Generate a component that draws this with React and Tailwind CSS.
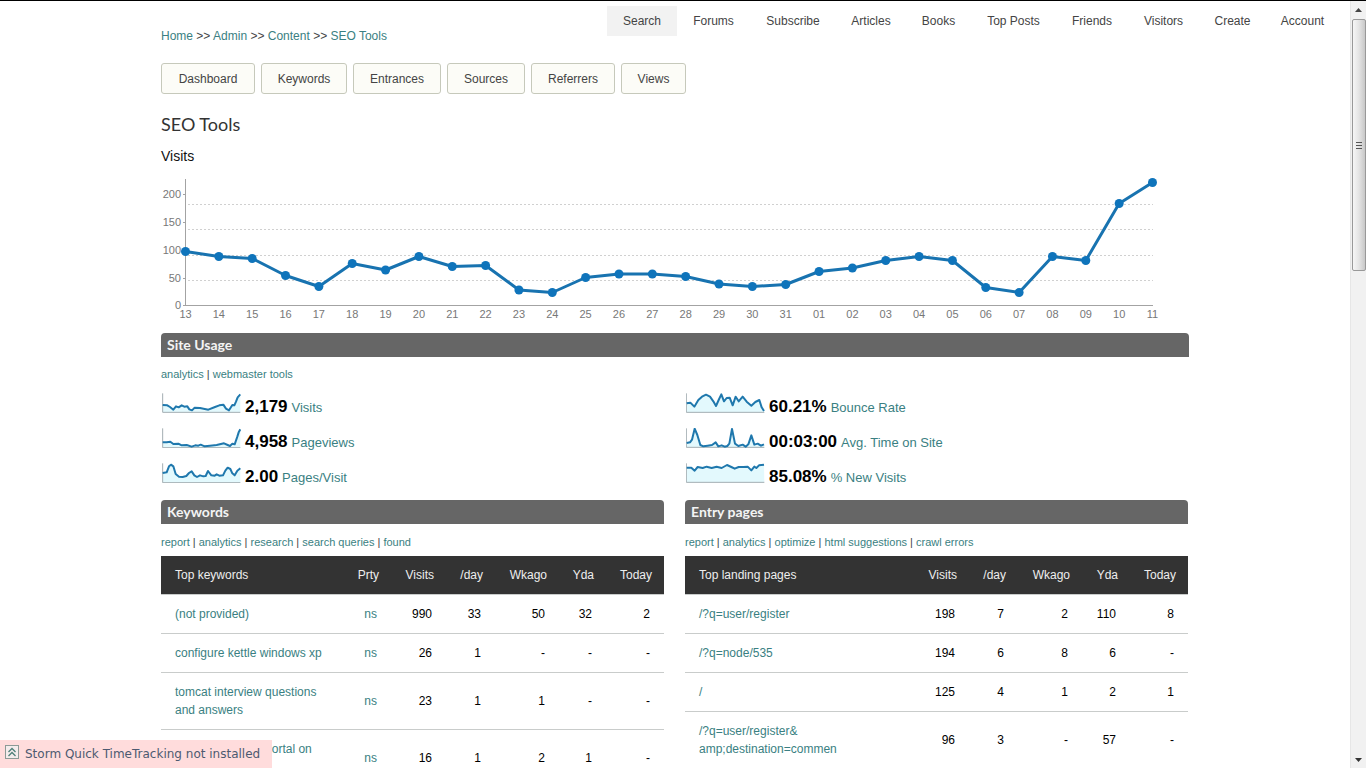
import React from "react";

const link = "text-[#3a7f82] hover:underline";

const navItems = [
  ["Search", "w-[70px]"],
  ["Forums", "w-[73px]"],
  ["Subscribe", "w-[86px]"],
  ["Articles", "w-[70px]"],
  ["Books", "w-[65px]"],
  ["Top Posts", "w-[85px]"],
  ["Friends", "w-[72px]"],
  ["Visitors", "w-[71px]"],
  ["Create", "w-[67px]"],
  ["Account", "w-[73px]"],
];

const tabs = [
  ["Dashboard", "w-[94px]"],
  ["Keywords", "w-[86px]"],
  ["Entrances", "w-[88px]"],
  ["Sources", "w-[78px]"],
  ["Referrers", "w-[84px]"],
  ["Views", "w-[65px]"],
];

const days = ["13", "14", "15", "16", "17", "18", "19", "20", "21", "22", "23", "24", "25", "26", "27", "28", "29", "30", "31", "01", "02", "03", "04", "05", "06", "07", "08", "09", "10", "11"];
const visitY = [251.5, 256.5, 258.5, 275.5, 286.5, 263.5, 270, 256.5, 266.5, 265.5, 290, 292.5, 277.5, 274, 274, 276.5, 284, 286.5, 284.5, 271.5, 268, 260.5, 256.5, 260.5, 287.5, 292.5, 256.5, 260.5, 203.5, 182.5];
const dayX = (i) => 185.5 + (i * 967) / 29;

function VisitsChart() {
  const points = visitY.map((y, i) => `${dayX(i)},${y}`).join(" ");
  return (
    <svg viewBox="161 172 1028 153" className="block w-full" role="img" aria-label="Visits per day">
      {[204.5, 229.5, 255.5, 280.5].map((y) => (
        <line key={y} x1="188" x2="1153" y1={y} y2={y} stroke="#d0d0d0" strokeDasharray="2 2" />
      ))}
      <path d="M185.5 179V305.5H1153" fill="none" stroke="#a3a3a3" />
      {[["200", 194.5], ["150", 222.5], ["100", 250.5], ["50", 278.5], ["0", 305.5]].map(([t, y]) => (
        <g key={t}>
          <line x1="183" x2="186" y1={y} y2={y} stroke="#a3a3a3" />
          <text x="181" y={y + 3.5} textAnchor="end" fontSize="11" fill="#777">{t}</text>
        </g>
      ))}
      {days.map((d, i) => (
        <text key={d} x={dayX(i)} y="318" textAnchor="middle" fontSize="11" fill="#777">{d}</text>
      ))}
      <polyline points={points} fill="none" stroke="#1873b0" strokeWidth="3" strokeLinejoin="round" />
      {visitY.map((y, i) => (
        <circle key={i} cx={dayX(i)} cy={y} r="4.5" fill="#0f74bb" />
      ))}
    </svg>
  );
}

const leftStats = [
  { value: "2,179", label: "Visits", box: "36 189 237 60", x: 38, top: 190, base: 247, right: 271,
    pts: "38,225 52,226 60,231 70,239 78,229 86,232 95,226 103,230 112,229 118,238 126,241 134,233 150,234 175,239 195,231 208,226 220,224 228,236 237,241 247,225 253,226 258,215 263,202 271,193" },
  { value: "4,958", label: "Pageviews", box: "36 290 237 60", x: 38, top: 291, base: 349, right: 271,
    pts: "38,333 50,333 61,331 70,338 85,337 95,342 110,341 125,346 136,342 145,343 152,340 164,345 180,343 200,341 222,336 233,341 240,344 247,337 254,339 262,316 266,303 271,294" },
  { value: "2.00", label: "Pages/Visit", box: "36 395 237 60", x: 38, top: 396, base: 454, right: 271,
    pts: "38,425 50,423 57,405 63,400 70,405 77,428 87,436 98,437 109,434 117,425 125,420 133,432 141,437 150,432 160,435 167,434 174,419 184,432 194,433 200,429 208,433 219,432 226,418 233,409 241,413 247,426 254,432 262,418 271,411" },
];
const rightStats = [
  { value: "60.21%", label: "Bounce Rate", box: "48 39 237 60", x: 49, top: 40, base: 97, right: 283,
    pts: "50,70 61,68 73,80 85,60 96,50 108,44 120,50 130,64 138,78 146,60 154,43 162,64 170,54 179,53 188,76 197,50 206,64 218,50 230,65 244,77 256,66 268,60 275,82 282,93" },
  { value: "00:03:00", label: "Avg. Time on Site", box: "48 141 237 60", x: 49, top: 142, base: 199, right: 283,
    pts: "50,186 60,184 66,176 74,143 82,162 91,192 100,196 113,194 126,192 137,184 145,196 155,193 164,197 172,195 178,188 186,144 195,188 205,195 218,191 227,197 235,190 244,163 253,191 263,188 273,194 282,190" },
  { value: "85.08%", label: "% New Visits", box: "48 245 237 60", x: 49, top: 246, base: 303, right: 283,
    pts: "50,259 64,259 74,268 83,257 98,260 110,256 125,260 140,256 155,260 171,251 184,257 194,262 206,257 220,257 233,256 244,267 253,256 259,260 267,252 282,250" },
];

function Stat({ s }) {
  return (
    <div className="flex items-start gap-1">
      <svg viewBox={s.box} className="h-5 w-[79px] shrink-0" aria-hidden="true">
        <polygon points={`${s.x},${s.base} ${s.pts} ${s.right},${s.base}`} fill="#e3f9fd" />
        <path d={`M${s.x} ${s.top}V${s.base}H${s.right}`} fill="none" stroke="#a3aeb2" strokeWidth="3" />
        <polyline points={s.pts} fill="none" stroke="#1f78ad" strokeWidth="6" strokeLinejoin="round" />
      </svg>
      <p className="pt-1 leading-5">
        <strong className="mr-1 text-[17px] text-black">{s.value}</strong>
        <a href="#" className={`${link} text-[13px]`}>{s.label}</a>
      </p>
    </div>
  );
}

function SectionTitle({ children }) {
  return (
    <h2 className="h-6 rounded-t bg-[#666] px-[6px] font-[Lato,sans-serif] text-sm leading-[23px] font-bold text-[#f4f4f4]">
      {children}
    </h2>
  );
}

function LinkRow({ items }) {
  return (
    <p className="text-[11px] leading-4 text-[#444]">
      {items.map((t, i) => (
        <React.Fragment key={t}>
          {i > 0 && " | "}
          <a href="#" className={link}>{t}</a>
        </React.Fragment>
      ))}
    </p>
  );
}

function DataTable({ widths, head, rows, linked }) {
  return (
    <table className="w-full table-fixed border-collapse text-xs leading-[18px]">
      <colgroup>
        {widths.map((w, i) => <col key={i} className={w} />)}
      </colgroup>
      <thead>
        <tr className="border-b border-[#c9cccb] bg-[#333] text-[#eee]">
          {head.map((h, i) => (
            <th key={h} scope="col" className={`py-[10px] font-normal ${i === 0 ? "pl-[14px] text-left" : "pr-3 text-right"}`}>{h}</th>
          ))}
        </tr>
      </thead>
      <tbody>
        {rows.map((r, k) => (
          <tr key={k} className="border-b border-[#c9cccb] text-black">
            {r.map((c, i) => (
              <td key={i} className={`py-[10px] ${i === 0 ? "px-[14px] text-left" : "pr-[14px] text-right"}`}>
                {i < linked ? <a href="#" className={link}>{c}</a> : c}
              </td>
            ))}
          </tr>
        ))}
      </tbody>
    </table>
  );
}

export default function App() {
  return (
    <div className="flex h-screen overflow-hidden border-t border-black bg-white font-['Liberation_Sans',Arial,sans-serif] text-xs text-[#444]">
      <div className="min-w-0 flex-1">
        <nav className="flex justify-end pt-[5px] pr-[11px]" aria-label="Main">
          {navItems.map(([n, w], i) => (
            <a key={n} href="#" className={`text-center leading-[30px] text-[#444] ${w} ${i === 0 ? "bg-[#f2f2f2]" : ""}`}>{n}</a>
          ))}
        </nav>

        <main className="mx-auto -mt-[9px] max-w-[1028px]">
          <p className="leading-[18px]">
            <a href="#" className={link}>Home</a> &gt;&gt; <a href="#" className={link}>Admin</a> &gt;&gt;{" "}
            <a href="#" className={link}>Content</a> &gt;&gt; <a href="#" className={link}>SEO Tools</a>
          </p>

          <div className="mt-[18px] flex gap-[6px]">
            {tabs.map(([t, w]) => (
              <button key={t} type="button" className={`h-[31px] rounded-[3px] border border-[#c6c9bb] bg-[#fcfcf7] text-[#444] ${w}`}>{t}</button>
            ))}
          </div>

          <h1 className="mt-[19px] font-[Lato,sans-serif] text-lg leading-[22px] text-[#333]">SEO Tools</h1>
          <h2 className="mt-[11px] mb-[6px] text-sm leading-5 text-[#111]">Visits</h2>
          <VisitsChart />

          <section className="mt-2">
            <SectionTitle>Site Usage</SectionTitle>
            <div className="mt-[9px]"><LinkRow items={["analytics", "webmaster tools"]} /></div>
            <div className="mt-[11px] grid grid-cols-2 gap-x-5">
              {[leftStats, rightStats].map((col, i) => (
                <div key={i} className="flex flex-col gap-[10px] pl-px">
                  {col.map((s) => <Stat key={s.label} s={s} />)}
                </div>
              ))}
            </div>
          </section>

          <div className="mt-3 grid grid-cols-2 gap-x-[21px] pr-px">
            <section>
              <SectionTitle>Keywords</SectionTitle>
              <div className="mt-[10px] mb-[6px]"><LinkRow items={["report", "analytics", "research", "search queries", "found"]} /></div>
              <DataTable
                linked={2}
                widths={["w-auto", "w-[46px]", "w-[55px]", "w-[49px]", "w-[64px]", "w-[47px]", "w-[58px]"]}
                head={["Top keywords", "Prty", "Visits", "/day", "Wkago", "Yda", "Today"]}
                rows={[
                  ["(not provided)", "ns", "990", "33", "50", "32", "2"],
                  ["configure kettle windows xp", "ns", "26", "1", "-", "-", "-"],
                  ["tomcat interview questions and answers", "ns", "23", "1", "1", "-", "-"],
                  [<>deploying liferay portal on<br />&nbsp;</>, "ns", "16", "1", "2", "1", "-"],
                ]}
              />
            </section>
            <section>
              <SectionTitle>Entry pages</SectionTitle>
              <div className="mt-[10px] mb-[6px]"><LinkRow items={["report", "analytics", "optimize", "html suggestions", "crawl errors"]} /></div>
              <DataTable
                linked={1}
                widths={["w-auto", "w-[55px]", "w-[49px]", "w-[64px]", "w-[48px]", "w-[58px]"]}
                head={["Top landing pages", "Visits", "/day", "Wkago", "Yda", "Today"]}
                rows={[
                  ["/?q=user/register", "198", "7", "2", "110", "8"],
                  ["/?q=node/535", "194", "6", "8", "6", "-"],
                  ["/", "125", "4", "1", "2", "1"],
                  [<>/?q=user/register&amp;<br />amp;destination=commen</>, "96", "3", "-", "57", "-"],
                ]}
              />
            </section>
          </div>
        </main>
      </div>

      <div className="flex w-4 shrink-0 flex-col items-center border-l border-[#e6e6e6] bg-[#f1f1f1]" aria-hidden="true">
        <svg viewBox="0 0 7 4" className="mt-[7px] mb-[7px] h-1 w-[7px]"><path d="M0 4L3.5 0L7 4Z" fill="#444" /></svg>
        <div className="flex h-[252px] w-[14px] items-center justify-center rounded-[2px] border border-[#999] bg-linear-to-r from-[#f6f6f6] via-[#e4e4e4] to-[#c8c8c8]">
          <svg viewBox="0 0 6 8" className="h-2 w-[6px]"><path d="M0 1.5H6M0 4.5H6M0 7.5H6" stroke="#555" /></svg>
        </div>
        <svg viewBox="0 0 7 4" className="mt-auto mb-[6px] h-1 w-[7px]"><path d="M0 0L3.5 4L7 0Z" fill="#333" /></svg>
      </div>

      <div className="fixed bottom-0 left-0 flex h-7 w-[272px] items-center gap-[6px] bg-[#ffdcdc] pl-[5px] font-['DejaVu_Sans',Verdana,sans-serif] text-xs text-[#4d5a70]">
        <svg viewBox="0 0 14 14" className="mb-1 h-[14px] w-[14px]" fill="none" aria-hidden="true">
          <rect x="0.5" y="0.5" width="13" height="13" fill="#f4ecec" stroke="#8c9a96" />
          <path d="M3.5 7L7 3.5L10.5 7M3.5 11L7 7.5L10.5 11" stroke="#4f7f78" strokeWidth="1.3" />
        </svg>
        <a href="#">Storm Quick TimeTracking not installed</a>
      </div>
    </div>
  );
}
